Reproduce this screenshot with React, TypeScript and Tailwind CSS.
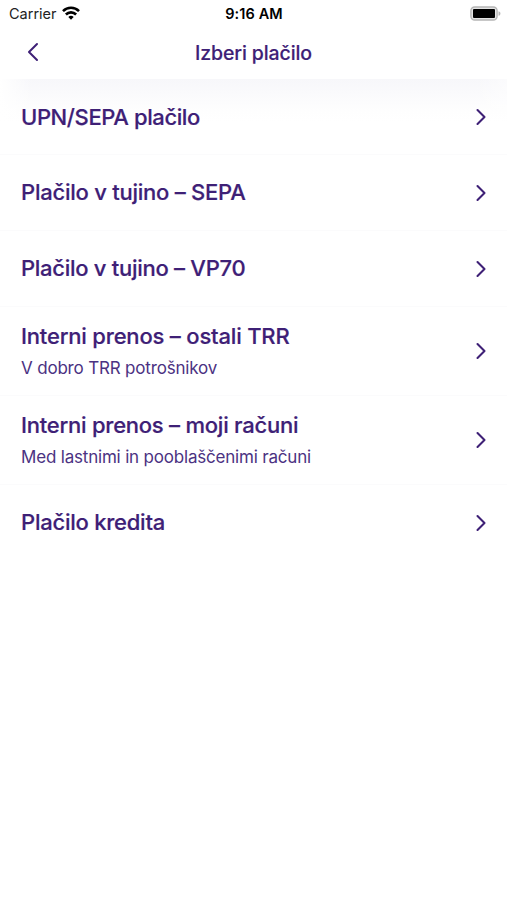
import { ChevronLeft, ChevronRight } from 'lucide-react'

type PaymentType = {
  title: string
  subtitle?: string
  titleClass: string
  subtitleClass?: string
}

const paymentTypes: PaymentType[] = [
  { title: 'UPN/SEPA plačilo', titleClass: 'tracking-[-0.4px] pt-px' },
  { title: 'Plačilo v tujino – SEPA', titleClass: 'tracking-[-0.24px]' },
  { title: 'Plačilo v tujino – VP70', titleClass: 'tracking-[-0.28px]' },
  {
    title: 'Interni prenos – ostali TRR',
    subtitle: 'V dobro TRR potrošnikov',
    titleClass: 'tracking-[-0.19px]',
    subtitleClass: 'tracking-[-0.18px]',
  },
  {
    title: 'Interni prenos – moji računi',
    subtitle: 'Med lastnimi in pooblaščenimi računi',
    titleClass: 'tracking-[-0.24px]',
    subtitleClass: 'tracking-[-0.19px]',
  },
  { title: 'Plačilo kredita', titleClass: 'tracking-[-0.24px] pb-px' },
]

function WifiIcon() {
  return (
    <svg
      className="-mt-px"
      width="18"
      height="14"
      viewBox="0 0 18 14"
      fill="none"
      stroke="#000"
      strokeWidth="2.6"
    >
      <path d="M1 5.1a11.4 11.4 0 0 1 16 0" />
      <path d="M3.9 8.5a7.2 7.2 0 0 1 10.2 0" />
      <path d="M9 13.8 6.3 11.1a4 4 0 0 1 5.4 0z" fill="#000" stroke="none" />
    </svg>
  )
}

function BatteryIcon() {
  return (
    <svg width="31" height="15" viewBox="0 0 31 15">
      <rect x="0.9" y="1" width="26.2" height="13" rx="3.8" fill="#e4e4e4" stroke="#b5b5b5" strokeWidth="1.4" />
      <rect x="3" y="3.1" width="22" height="8.8" rx="1" fill="#000" />
      <path d="M28.5 5.2c1.6.5 1.9 1.2 1.9 2.3s-.3 1.8-1.9 2.3z" fill="#b5b5b5" />
    </svg>
  )
}

function StatusBar() {
  return (
    <div className="grid h-[27px] grid-cols-3 items-center pl-[9px] pr-[6px] text-black">
      <div className="flex items-center gap-[5px]">
        <span className="pt-px text-[14.5px] leading-none text-[#222]">Carrier</span>
        <WifiIcon />
      </div>
      <span className="pt-[2px] text-center text-[14.5px] font-semibold leading-none tracking-[0.1px]">
        <span className="-ml-[2px]">9:16 AM</span>
      </span>
      <div className="flex justify-end">
        <BatteryIcon />
      </div>
    </div>
  )
}

export default function App() {
  return (
    <div className="h-[900px] w-full overflow-hidden bg-white font-[Inter,sans-serif] text-[#3e2076]">
      <StatusBar />
      <header className="grid h-[52px] grid-cols-[60px_1fr_60px] items-center">
        <button aria-label="Nazaj" className="flex pb-[2px] pl-[17px]">
          <ChevronLeft className="h-[32px] w-[32px]" strokeWidth={1.5} />
        </button>
        <h1 className="pt-px text-center text-[19.5px] font-medium tracking-[-0.12px] [-webkit-text-stroke:0.15px_#3e2076]">
          Izberi plačilo
        </h1>
      </header>

      {/* header shadow, faded out towards both edges */}
      <main className="bg-[linear-gradient(to_right,#ffffff_0px,#ffffff00_32px,#ffffff00_475px,#ffffff80_507px),linear-gradient(to_bottom,#f7f7fa_0px,#fafafc_14px,#fefefe_32px,#ffffff_44px)]">
        {paymentTypes.map((payment) => (
          <button
            key={payment.title}
            className={`flex w-full items-center justify-between border-b border-[#fbfbfc] pl-[21px] pr-[12px] text-left last:border-b-0 ${
              payment.subtitle ? 'h-[89px]' : 'h-[76px]'
            }`}
          >
            <span className={`flex flex-col ${payment.subtitle ? 'gap-[5px] pt-px' : 'pb-px'}`}>
              <span
                className={`text-[22px] font-medium leading-[28px] [-webkit-text-stroke:0.2px_#3e2076] ${payment.titleClass}`}
              >
                {payment.title}
              </span>
              {payment.subtitle && (
                <span className={`text-[17px] leading-[26px] text-[#4b3282] ${payment.subtitleClass}`}>
                  {payment.subtitle}
                </span>
              )}
            </span>
            <ChevronRight className="h-[28px] w-[28px]" strokeWidth={1.8} />
          </button>
        ))}
      </main>
    </div>
  )
}
